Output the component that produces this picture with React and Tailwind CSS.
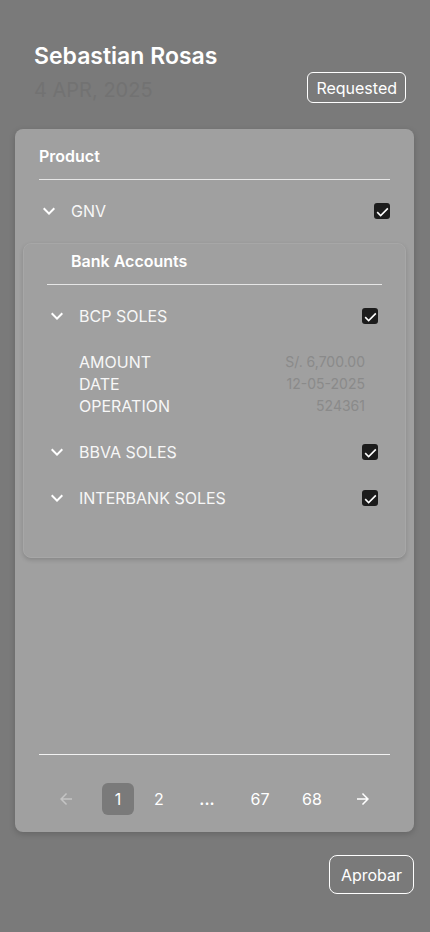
import React from 'react';

const Chevron = () => (
  <svg viewBox="0 0 24 24" className="w-6 h-6 shrink-0" fill="#ffffff">
    <path d="M16.59 8.59 12 13.17 7.41 8.59 6 10l6 6 6-6z" />
  </svg>
);

const Check = () => (
  <div className="w-4 h-4 rounded-[3px] bg-[#1c1c1c] flex items-center justify-center shrink-0">
    <svg viewBox="0 0 24 24" className="w-[15px] h-[15px]" fill="#ffffff">
      <path d="M9 16.6 4.4 12l-1.8 1.8L9 20.2 21.4 7.8 19.6 6z" />
    </svg>
  </div>
);

const Arrow = ({ dir, faded }) => (
  <svg viewBox="0 0 24 24" className="w-[18px] h-[18px]" fill={faded ? '#c4c4c4' : '#ffffff'}>
    {dir === 'left' ? (
      <path d="M20 11H7.83l5.59-5.59L12 4l-8 8 8 8 1.41-1.41L7.83 13H20v-2z" />
    ) : (
      <path d="m12 4-1.41 1.41L16.17 11H4v2h12.17l-5.58 5.59L12 20l8-8z" />
    )}
  </svg>
);

const Row = ({ label, right = 'pr-0' }) => (
  <div className={`flex items-center h-[40px] ${right}`}>
    <div className="-ml-[2px]">
      <Chevron />
    </div>
    <span className="ml-[10px] text-[16px] text-[#f7f7f7] flex-1">{label}</span>
    <Check />
  </div>
);

const details = [
  ['AMOUNT', 'S/. 6,700.00'],
  ['DATE', '12-05-2025'],
  ['OPERATION', '524361'],
];

export default function App() {
  return (
    <div className="min-h-[932px] bg-[#7a7a7a] font-['Inter','Noto_Sans',sans-serif] pb-[38px]">
      {/* Header */}
      <div className="pl-[34px] pr-[24px] pt-[42px]">
        <h1 className="text-[23px] leading-[28px] font-semibold text-white">Sebastian Rosas</h1>
        <div className="flex items-start justify-between">
          <span className="text-[20px] leading-[28px] text-[#727272] mt-[6px]">4 APR, 2025</span>
          <button className="h-[31px] px-[8px] border border-white rounded-md text-[16px] text-white mt-[2px]">
            Requested
          </button>
        </div>
      </div>

      {/* Card */}
      <div className="mt-[25px] ml-[15px] mr-[16px] h-[703px] bg-[#a0a0a0] rounded-lg shadow-[0_2px_6px_rgba(0,0,0,0.18)] flex flex-col">
        <div className="px-[24px] pt-[16px]">
          <div className="text-[16px] leading-[22px] font-semibold text-white">Product</div>
          <div className="mt-[12px] h-px bg-[#e6e6e6]" />
          <div className="mt-[11px]">
            <Row label="GNV" />
          </div>
        </div>

        {/* Nested bank accounts */}
        <div className="mx-[8px] mt-[12px] border border-[#a7a7a7] rounded-lg bg-[#a0a0a0] shadow-[0_2px_4px_rgba(0,0,0,0.16)] pt-[6px] pb-[39px] pl-[23px] pr-[23px]">
          <div className="pl-[24px] text-[16px] leading-[22px] font-semibold text-white">Bank Accounts</div>
          <div className="mt-[12px] h-px bg-[#e6e6e6]" />
          <div className="mt-[11px]">
            <Row label="BCP SOLES" right="pr-[4px]" />
          </div>
          <div className="mt-[15px] pl-[32px] pr-[17px]">
            {details.map(([k, v]) => (
              <div key={k} className="flex justify-between items-center text-[16px] leading-[22px]">
                <span className="text-[#f7f7f7]">{k}</span>
                <span className="text-[#8a8a8a] text-[14px]">{v}</span>
              </div>
            ))}
          </div>
          <div className="mt-[15px]">
            <Row label="BBVA SOLES" right="pr-[4px]" />
          </div>
          <div className="mt-[6px]">
            <Row label="INTERBANK SOLES" right="pr-[4px]" />
          </div>
        </div>

        {/* Pagination */}
        <div className="mt-auto px-[24px] pb-[17px]">
          <div className="h-px bg-[#f2f2f2]" />
          <div className="mt-[28px] flex items-center h-[32px] text-[16px] text-white">
            <div className="ml-[11px] w-[32px] flex justify-center">
              <Arrow dir="left" faded />
            </div>
            <div className="ml-[20px] w-[32px] h-[32px] rounded-md bg-[#7a7a7a] flex items-center justify-center">1</div>
            <div className="ml-[9px] w-[32px] flex justify-center">2</div>
            <div className="ml-[16px] w-[32px] flex justify-center font-semibold">...</div>
            <div className="ml-[21px] w-[32px] flex justify-center">67</div>
            <div className="ml-[20px] w-[32px] flex justify-center">68</div>
            <div className="ml-[19px] w-[32px] flex justify-center">
              <Arrow dir="right" />
            </div>
          </div>
        </div>
      </div>

      <div className="flex justify-end mr-[16px] mt-[23px]">
        <button className="h-[39px] w-[85px] border border-white rounded-lg text-[16px] text-white">
          Aprobar
        </button>
      </div>
    </div>
  );
}
